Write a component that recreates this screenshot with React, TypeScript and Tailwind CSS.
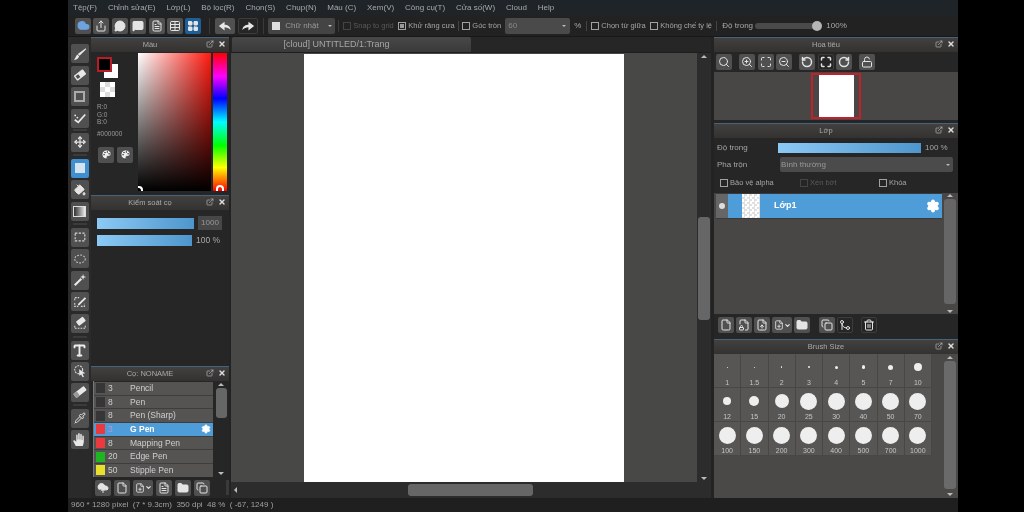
import React from "react";
import {
  Move, PaintBucket, Type, Pipette, File, FileText, FileUp, FilePlus, FileLock,
  Folder, Copy, Trash2, ZoomIn, ZoomOut, Maximize, RotateCcw, RotateCw, Settings, Palette, CloudUpload, Cloud,
  ChevronDown, ExternalLink, X, Share, MessageCircle, MessageSquare, Table, LayoutGrid,
  Search, Unlock, GitMerge,
} from "lucide-react";

const ic = "w-[12px] h-[12px] text-[#e4e4e4]";

function Btn({ children, active, dark, className = "" }: { children?: React.ReactNode; active?: boolean; dark?: boolean; className?: string }) {
  return (
    <div className={`flex items-center justify-center rounded-[2px] shrink-0 ${active ? "bg-[#3f8fd0]" : dark ? "bg-[#262626] border border-[#3c3c3c]" : "bg-[#505050]"} ${className}`}>
      {children}
    </div>
  );
}

function Head({ title, className = "" }: { title: string; className?: string }) {
  return (
    <div className={`h-[15px] shrink-0 relative flex items-center justify-center pr-[20px] border-t border-[#46637c] bg-gradient-to-b from-[#424140] to-[#333231] ${className}`}>
      <span className="text-[7.5px] text-[#a9a9a9]">{title}</span>
      <div className="absolute right-[3px] top-[2px] flex gap-[4px] items-center">
        <ExternalLink className="w-[8px] h-[8px] text-[#bbbbbb]" strokeWidth={2} />
        <X className="w-[8px] h-[8px] text-[#dddddd]" strokeWidth={4} />
      </div>
    </div>
  );
}

function Tool({ children, active }: { children: React.ReactNode; active?: boolean }) {
  return <Btn active={active} className="w-[18px] h-[19px]">{children}</Btn>;
}

function Bar() {
  return <div className="h-[2px] w-[14px] bg-[#3b3b3b] mx-auto" />;
}

function CheckBox({ label, checked, dim, className = "" }: { label: string; checked?: boolean; dim?: boolean; className?: string }) {
  return (
    <div className={`flex items-center gap-[2px] shrink-0 ${className}`}>
      <div className={`w-[8px] h-[8px] border ${dim ? "border-[#444]" : "border-[#a0a0a0]"} flex items-center justify-center`}>
        {checked && <div className="w-[4px] h-[4px] bg-[#999]" />}
      </div>
      <span className={`text-[7.5px] whitespace-nowrap ${dim ? "text-[#5a5a5a]" : "text-[#a5a5a5]"}`}>{label}</span>
    </div>
  );
}

function Svg({ children, size = 14 }: { children: React.ReactNode; size?: number }) {
  return <svg width={size} height={size} viewBox="0 0 16 16" fill="#e8e8e8">{children}</svg>;
}

const BrushIcon = () => <Svg><path d="M14.5 1.5 L15 2.5 L7.5 10 L5.5 8 Z M5 8.5 L7 10.5 C6 14 3 14.5 1 14.5 C3 13 3 10.5 5 8.5Z" /></Svg>;
const EraserIcon = () => <Svg><g transform="rotate(-38 8 8)"><rect x="1.5" y="4.5" width="13" height="7" rx="1" /><rect x="3" y="6" width="4" height="4" fill="#505050" /></g></Svg>;
const MarkerIcon = () => <Svg><g transform="rotate(-38 8 8)"><rect x="0.5" y="5" width="15" height="6" rx="1" /><rect x="0.5" y="5" width="5" height="6" rx="1" fill="#999" /></g></Svg>;
const CorrectIcon = () => <Svg><path d="M2 10 L6 13 L14 4" fill="none" stroke="#e8e8e8" strokeWidth="2" /><circle cx="2.5" cy="5" r="1" /><circle cx="5" cy="7.5" r="1" /></Svg>;
const UndoIcon = () => <Svg><path d="M14.5 12.5 C14 8 10.5 6.5 7.5 6.5 V3 L1 8 L7.5 13 V9.5 C10 9.5 12.5 10.5 14.5 12.5Z" /></Svg>;
const RedoIcon = () => <Svg><path d="M1.5 12.5 C2 8 5.5 6.5 8.5 6.5 V3 L15 8 L8.5 13 V9.5 C6 9.5 3.5 10.5 1.5 12.5Z" /></Svg>;
const DashedSel = () => <Svg><rect x="2.5" y="3.5" width="11" height="9" fill="none" stroke="#d8d8d8" strokeWidth="1.3" strokeDasharray="2.5 1.6" /></Svg>;
const DashedLasso = () => <Svg><ellipse cx="8" cy="8" rx="6" ry="4.5" fill="none" stroke="#c8c8c8" strokeWidth="1.2" strokeDasharray="2 1.5" /></Svg>;
const WandIcon = () => <Svg><path d="M2 14 L9.5 6.5" stroke="#e8e8e8" strokeWidth="2.4" /><path d="M11.5 1 L12.3 3.7 L15 4.5 L12.3 5.3 L11.5 8 L10.7 5.3 L8 4.5 L10.7 3.7Z" /></Svg>;
const SelPen = () => <Svg><path d="M2 6 V3 H7 M2 9 V13 H6 M9 13 H13 V10" fill="none" stroke="#d8d8d8" strokeWidth="1.2" strokeDasharray="2 1.2" /><path d="M6 10 L13.5 2.5 L15 4 L7.5 11.5 L5.5 12Z" /></Svg>;
const SelEraser = () => <Svg><path d="M2 11 V14 H14 V11" fill="none" stroke="#d8d8d8" strokeWidth="1.2" strokeDasharray="2 1.2" /><g transform="rotate(-38 9 6)"><rect x="4" y="3" width="10" height="6" rx="1" /></g></Svg>;
const SelCursor = () => <Svg><circle cx="6.5" cy="6.5" r="4.5" fill="none" stroke="#d8d8d8" strokeWidth="1.3" strokeDasharray="2 1.2" /><path d="M7 6 L14 10.5 L10.8 11.2 L12.5 14.5 L11 15 L9.3 12 L7.2 13.5Z" /></Svg>;
const HandIcon = () => <Svg size={15}><path d="M4 15 L1.5 10 C1 9 2.3 8.2 3 9 L4.5 10.5 V3.5 C4.5 2.4 6 2.4 6 3.5 V8 H6.6 V2 C6.6 0.9 8.2 0.9 8.2 2 V8 H8.8 V2.8 C8.8 1.7 10.4 1.7 10.4 2.8 V8.5 H11 V4.5 C11 3.4 12.6 3.4 12.6 4.5 V11 L11.5 15Z" /></Svg>;

const brushes = [
  { n: "3", name: "Pencil", c: "#363636" },
  { n: "8", name: "Pen", c: "#363636" },
  { n: "8", name: "Pen (Sharp)", c: "#363636" },
  { n: "3", name: "G Pen", c: "#ea3a3f", sel: true },
  { n: "8", name: "Mapping Pen", c: "#ea3a3f" },
  { n: "20", name: "Edge Pen", c: "#1fb520" },
  { n: "50", name: "Stipple Pen", c: "#e9e02a" },
];

const sizes = [
  ["1", 0.6], ["1.5", 0.8], ["2", 1.3], ["3", 2.2], ["4", 3], ["5", 3.5], ["7", 5], ["10", 8],
  ["12", 8], ["15", 10], ["20", 14], ["25", 17], ["30", 17], ["40", 17], ["50", 17], ["70", 17],
  ["100", 17], ["150", 17], ["200", 17], ["300", 17], ["400", 17], ["500", 17], ["700", 17], ["1000", 17],
] as [string, number][];

const menu = ["Tệp(F)", "Chỉnh sửa(E)", "Lớp(L)", "Bộ lọc(R)", "Chọn(S)", "Chụp(N)", "Màu (C)", "Xem(V)", "Công cụ(T)", "Cửa số(W)", "Cloud", "Help"];

export default function App() {
  return (
    <div className="w-[1024px] h-[512px] bg-black flex overflow-hidden blur-[0.45px]" style={{ fontFamily: '"Liberation Sans", "Noto Sans", sans-serif' }}>
      <div className="w-[68px] shrink-0" />
      <div className="w-[890px] shrink-0 flex flex-col bg-[#232323]">
        {/* menu */}
        <div className="h-[15px] shrink-0 bg-[#1f2429] flex items-center pl-[5px] gap-[10.9px]">
          {menu.map((m) => <span key={m} className="text-[8px] text-[#a8a8a8] whitespace-nowrap">{m}</span>)}
        </div>
        {/* toolbar */}
        <div className="h-[22px] shrink-0 bg-[#222222] flex items-center pl-[7px] border-b border-[#181818]">
          <div className="flex gap-[2.4px] items-center">
            <Btn className="w-[16px] h-[16px]"><Cloud className="w-[13px] h-[13px] text-[#6ea3e0]" fill="#6ea3e0" /></Btn>
            <Btn className="w-[16px] h-[16px]"><Share className={ic} /></Btn>
            <Btn className="w-[16px] h-[16px]"><MessageCircle className={ic} fill="#e4e4e4" /></Btn>
            <Btn className="w-[16px] h-[16px]"><MessageSquare className={ic} fill="#e4e4e4" /></Btn>
            <Btn className="w-[16px] h-[16px]"><FileText className={ic} /></Btn>
            <Btn className="w-[16px] h-[16px]"><Table className={ic} /></Btn>
            <div className="w-[16px] h-[16px] shrink-0 rounded-[2px] bg-[#1d5f99] flex items-center justify-center"><LayoutGrid className={ic} fill="#e4e4e4" /></div>
          </div>
          <div className="w-[1px] h-[16px] bg-[#3a3a3a] ml-[8px] mr-[5px]" />
          <div className="flex gap-[3px]">
            <Btn className="w-[20px] h-[16px]"><UndoIcon /></Btn>
            <Btn dark className="w-[20px] h-[16px]"><RedoIcon /></Btn>
          </div>
          <div className="w-[1px] h-[16px] bg-[#3a3a3a] ml-[5px] mr-[4px]" />
          <div className="w-[67px] h-[16px] bg-[#444444] rounded-[2px] flex items-center pl-[4px] shrink-0">
            <div className="w-[8px] h-[8px] bg-[#dddddd]" />
            <span className="text-[8px] text-[#999] ml-[5px]">Chữ nhật</span>
            <span className="ml-auto mr-[3px] w-0 h-0 border-x-[2px] border-x-transparent border-t-[2px] border-t-[#bbb]" />
          </div>
          <div className="w-[1px] h-[12px] bg-[#3a3a3a] ml-[3px] mr-[4px]" />
          <CheckBox label="Snap to grid" dim className="w-[55px]" />
          <CheckBox label="Khử răng cưa" checked className="w-[60px]" />
          <div className="w-[1px] h-[10px] bg-[#444] mr-[3px]" />
          <CheckBox label="Góc tròn" className="w-[43px]" />
          <div className="w-[65px] h-[16px] bg-[#4a4a4a] rounded-[2px] flex items-center pl-[3px] shrink-0">
            <span className="text-[8px] text-[#888]">60</span>
            <span className="ml-auto mr-[4px] w-0 h-0 border-x-[2px] border-x-transparent border-t-[2px] border-t-[#bbb]" />
          </div>
          <span className="text-[8px] text-[#aaa] ml-[4px] w-[12px]">%</span>
          <div className="w-[1px] h-[10px] bg-[#444] mr-[4px]" />
          <CheckBox label="Chọn từ giữa" className="w-[59px]" />
          <CheckBox label="Không chế tỷ lệ" className="w-[66px]" />
          <div className="w-[1px] h-[10px] bg-[#444] mr-[5px]" />
          <span className="text-[8px] text-[#aaa] whitespace-nowrap w-[33px]">Độ trong</span>
          <div className="w-[60px] h-[6px] bg-[#4a4a4a] rounded-[3px]" />
          <div className="w-[10px] h-[10px] rounded-full bg-[#b5b5b5] -ml-[3px] shrink-0" />
          <span className="text-[8px] text-[#aaa] ml-[4px]">100%</span>
        </div>
        {/* main */}
        <div className="flex-1 flex min-h-0">
          {/* tools */}
          <div className="w-[23px] shrink-0 flex flex-col items-center pt-[7px] bg-[#2a2a2a]">
            <div className="flex flex-col gap-[2.5px]">
              <Tool><BrushIcon /></Tool>
              <Tool><EraserIcon /></Tool>
              <Tool><div className="w-[11px] h-[11px] border-2 border-[#aaaaaa]" /></Tool>
              <Tool><CorrectIcon /></Tool>
            </div>
            <div className="my-[1.5px]"><Bar /></div>
            <Tool><Move className={ic} strokeWidth={2.5} /></Tool>
            <div className="my-[2.5px]"><Bar /></div>
            <div className="flex flex-col gap-[2.5px]">
              <Tool active><div className="w-[10px] h-[10px] bg-[#d5e3ef]" /></Tool>
              <Tool><PaintBucket className={ic} fill="#e4e4e4" /></Tool>
              <Tool><div className="w-[13px] h-[11px] bg-gradient-to-r from-[#333] to-[#eee] border border-[#ddd]" /></Tool>
            </div>
            <div className="my-[2.5px]"><Bar /></div>
            <div className="flex flex-col gap-[2.5px]">
              <Tool><DashedSel /></Tool>
              <Tool><DashedLasso /></Tool>
              <Tool><WandIcon /></Tool>
              <Tool><SelPen /></Tool>
              <Tool><SelEraser /></Tool>
            </div>
            <div className="my-[3px]"><Bar /></div>
            <div className="flex flex-col gap-[2px]">
              <Tool><Type className="w-[15px] h-[15px] text-[#eee]" strokeWidth={3} /></Tool>
              <Tool><SelCursor /></Tool>
              <Tool><MarkerIcon /></Tool>
            </div>
            <div className="my-[2.5px]"><Bar /></div>
            <div className="flex flex-col gap-[2.5px]">
              <Tool><Pipette className={ic} /></Tool>
              <Tool><HandIcon /></Tool>
            </div>
          </div>
          {/* left panels */}
          <div className="w-[138px] shrink-0 flex flex-col bg-[#262626]">
            <Head title="Màu" />
            <div className="h-[143px] shrink-0 flex pt-[1px] pb-[4px]">
              <div className="w-[47px] shrink-0 pl-[6px] pt-[4px] flex flex-col">
                <div className="relative h-[23px]">
                  <div className="w-[14px] h-[14px] bg-white absolute left-[7px] top-[7px]" />
                  <div className="w-[15px] h-[15px] bg-black border-2 border-[#b81c24] absolute left-0 top-0" />
                </div>
                <div className="w-[15px] h-[15px] ml-[3px] mt-[2px] bg-[repeating-conic-gradient(#dcdcdc_0_25%,#ffffff_0_50%)] bg-size-[10px_10px]" />
                <div className="text-[6.5px] leading-[7.5px] text-[#9a9a9a] mt-[6px]">R:0<br />G:0<br />B:0</div>
                <div className="text-[6.5px] text-[#9a9a9a] mt-[3px] leading-[10px]">#000000</div>
                <div className="flex gap-[3px] ml-[1px] mt-[8px]">
                  <Btn className="w-[16px] h-[16px]"><Palette className="w-[11px] h-[11px] text-[#eee]" fill="#eee" stroke="#444" /></Btn>
                  <Btn className="w-[16px] h-[16px]"><Palette className="w-[11px] h-[11px] text-[#eee]" fill="#eee" stroke="#444" /></Btn>
                </div>
              </div>
              <div className="w-[73px] shrink-0 relative bg-[linear-gradient(to_bottom,transparent,#000),linear-gradient(to_right,#fff,#ff1a10)]">
                <div className="absolute left-0 bottom-0 w-[5px] h-[5px] border-t-2 border-r-2 border-white rounded-tr-[4px]" />
              </div>
              <div className="w-[14px] ml-[2px] shrink-0 relative bg-[linear-gradient(to_bottom,#ff0000,#ff00ff_17%,#0000ff_33%,#00ffff_50%,#00ff00_67%,#ffff00_83%,#ff0000)]">
                <div className="absolute left-[3px] bottom-0 w-[8px] h-[6px] border-t-2 border-x-2 border-white rounded-t-[5px]" />
              </div>
            </div>
            <Head title="Kiểm soát cọ" />
            <div className="h-[156px] shrink-0 pl-[6px] pt-[6px] flex flex-col gap-[5px]">
              <div className="flex items-center">
                <div className="w-[97px] h-[11px] bg-gradient-to-r from-[#8ccaf5] to-[#4d96cd]" />
                <div className="ml-[4px] w-[24px] h-[14px] bg-[#474747] text-[8px] text-[#999] flex items-center justify-center">1000</div>
              </div>
              <div className="flex items-center">
                <div className="w-[95px] h-[11px] bg-gradient-to-r from-[#8ccaf5] to-[#4d96cd]" />
                <div className="ml-[4px] text-[8.5px] text-[#aaa] leading-[11px]">100 %</div>
              </div>
            </div>
            <Head title="Cọ: NONAME" />
            <div className="h-[96px] shrink-0 flex pl-[2px]">
              <div className="w-[120px] shrink-0 flex flex-col overflow-hidden border-l border-[#777] pt-[1px]">
                {brushes.map((b) => (
                  <div key={b.name} className={`h-[13.7px] shrink-0 flex items-center border-b border-[#3e3e3e] ${b.sel ? "bg-[#4f9dd8]" : "bg-[#555453]"}`}>
                    <div className="w-[9px] h-[10px] ml-[2px] shrink-0" style={{ backgroundColor: b.c }} />
                    <span className={`text-[8.5px] ml-[3px] w-[22px] ${b.sel ? "text-[#b79ad8]" : "text-[#cfcfcf]"}`}>{b.n}</span>
                    <span className={`text-[8.5px] whitespace-nowrap ${b.sel ? "text-white font-bold" : "text-[#cfcfcf]"}`}>{b.name}</span>
                    {b.sel && <Settings className="w-[10px] h-[10px] text-white ml-auto mr-[2px]" fill="#fff" stroke="#fff" />}
                  </div>
                ))}
              </div>
              <div className="w-[14px] ml-[1px] flex flex-col items-center">
                <span className="mt-[2px] w-0 h-0 border-x-[3px] border-x-transparent border-b-[3px] border-b-[#bbb]" />
                <div className="w-[11px] h-[30px] mt-[2px] bg-[#666] rounded-[3px]" />
                <span className="mt-auto mb-[2px] w-0 h-0 border-x-[3px] border-x-transparent border-t-[3px] border-t-[#bbb]" />
              </div>
            </div>
            <div className="flex-1 flex items-center pl-[4px] gap-[3px]">
              <Btn className="w-[16px] h-[16px]"><CloudUpload className={ic} fill="#e4e4e4" /></Btn>
              <Btn className="w-[16px] h-[16px]"><File className={ic} /></Btn>
              <Btn className="w-[20px] h-[16px]"><FilePlus className="w-[10px] h-[10px] text-[#e4e4e4]" /><ChevronDown className="w-[7px] h-[7px] text-[#e4e4e4]" strokeWidth={4} /></Btn>
              <Btn className="w-[16px] h-[16px]"><FileText className={ic} /></Btn>
              <Btn className="w-[16px] h-[16px]"><Folder className={ic} fill="#e4e4e4" /></Btn>
              <Btn className="w-[16px] h-[16px]"><Copy className={ic} /></Btn>
              <div className="w-[5px] h-[15px] bg-[#3a3a3a] ml-[13px]" />
            </div>
          </div>
          {/* canvas */}
          <div className="flex-1 min-w-0 flex flex-col ml-[2px] mr-[3px]">
            <div className="h-[15px] shrink-0 flex pl-[1px] bg-[#262626]">
              <div className="w-[239px] h-[15px] bg-gradient-to-b from-[#484848] to-[#3a3a3a] flex items-center justify-center pr-[30px] rounded-t-[2px]">
                <span className="text-[9px] text-[#a5a5a5]">[cloud] UNTITLED/1:Trang</span>
              </div>
            </div>
            <div className="flex-1 flex min-h-0 bg-[#484847] border-t border-[#1e1e1e]">
              <div className="flex-1 flex flex-col min-w-0">
                <div className="flex-1 pl-[73px] pt-[1px]">
                  <div className="w-[320px] h-full bg-white" />
                </div>
                <div className="h-[16px] shrink-0 flex items-center bg-[#2c2c2c] px-[3px]">
                  <span className="w-0 h-0 border-y-[3px] border-y-transparent border-r-[3px] border-r-[#bbb]" />
                  <div className="w-[125px] h-[12px] bg-[#666] rounded-[3px] ml-[171px]" />
                </div>
              </div>
              <div className="w-[14px] shrink-0 flex flex-col items-center bg-[#2c2c2c]">
                <span className="mt-[2px] w-0 h-0 border-x-[3px] border-x-transparent border-b-[3px] border-b-[#bbb]" />
                <div className="w-[12px] h-[103px] bg-[#666] rounded-[3px] mt-[159px]" />
                <span className="mt-auto mb-[18px] w-0 h-0 border-x-[3px] border-x-transparent border-t-[3px] border-t-[#bbb]" />
              </div>
            </div>
          </div>
          {/* right */}
          <div className="w-[244px] shrink-0 flex flex-col bg-[#262626]">
            <Head title="Hoa tiêu" />
            <div className="h-[20px] shrink-0 flex items-center pl-[2px] gap-[2.5px]">
              <Btn className="w-[16px] h-[16px]"><Search className={ic} /></Btn>
              <div className="w-[2px]" />
              <Btn className="w-[16px] h-[16px]"><ZoomIn className={ic} /></Btn>
              <Btn className="w-[16px] h-[16px]"><Maximize className={ic} /></Btn>
              <Btn className="w-[16px] h-[16px]"><ZoomOut className={ic} /></Btn>
              <div className="w-[2px]" />
              <Btn className="w-[16px] h-[16px]"><RotateCcw className={ic} strokeWidth={3} /></Btn>
              <Btn dark className="w-[16px] h-[16px]"><Maximize className={ic} strokeWidth={3} /></Btn>
              <Btn className="w-[16px] h-[16px]"><RotateCw className={ic} strokeWidth={3} /></Btn>
              <div className="w-[2px]" />
              <Btn className="w-[16px] h-[16px]"><Unlock className={ic} /></Btn>
            </div>
            <div className="h-[48px] shrink-0 bg-[#484746] flex justify-center pt-[1px]">
              <div className="w-[50px] h-[46px] border-2 border-[#c4202a] flex justify-center">
                <div className="w-[35px] h-full bg-white" />
              </div>
            </div>
            <div className="h-[3px] shrink-0" />
            <Head title="Lớp" />
            <div className="flex-none h-[55px] flex flex-col">
              <div className="flex items-center pl-[3px] mt-[3px] h-[13px]">
                <span className="text-[8px] text-[#a5a5a5] w-[61px]">Độ trong</span>
                <div className="w-[143px] h-[10px] bg-gradient-to-r from-[#8ccaf5] to-[#4d96cd]" />
                <span className="text-[8px] text-[#a5a5a5] ml-[4px]">100 %</span>
              </div>
              <div className="flex items-center pl-[3px] mt-[3px] h-[15px]">
                <span className="text-[8px] text-[#a5a5a5] w-[63px]">Pha trộn</span>
                <div className="w-[173px] h-[15px] bg-[#4b4b4b] rounded-[2px] flex items-center pl-[1px]">
                  <span className="text-[8px] text-[#999]">Bình thường</span>
                  <span className="ml-auto mr-[3px] w-0 h-0 border-x-[2px] border-x-transparent border-t-[2px] border-t-[#bbb]" />
                </div>
              </div>
              <div className="flex items-center pl-[6px] mt-[5px]">
                <CheckBox label="Bảo vệ alpha" className="w-[80px]" />
                <CheckBox label="Xén bớt" dim className="w-[79px]" />
                <CheckBox label="Khóa" />
              </div>
            </div>
            <div className="h-[121px] shrink-0 bg-[#484746] flex pl-[2px]">
              <div className="w-[226px] shrink-0">
                <div className="h-[26px] flex bg-[#4f9dd8] border-y border-[#3a3a3a] items-center">
                  <div className="w-[12px] h-full bg-[#666] flex items-center justify-center"><div className="w-[6px] h-[6px] rounded-full bg-[#ddd]" /></div>
                  <div className="w-[18px] h-[24px] ml-[14px] bg-[repeating-conic-gradient(#e0e0e0_0_25%,#ffffff_0_50%)] bg-size-[5px_5px]" />
                  <span className="text-[9px] text-white font-bold ml-[14px]">Lớp1</span>
                  <Settings className="w-[14px] h-[14px] text-white ml-auto mr-[2px]" fill="#fff" stroke="#fff" />
                </div>
              </div>
              <div className="w-[12px] ml-[2px] flex flex-col items-center">
                <span className="mt-[1px] w-0 h-0 border-x-[3px] border-x-transparent border-b-[3px] border-b-[#bbb]" />
                <div className="w-[12px] h-[105px] mt-[2px] bg-[#666] rounded-[3px]" />
                <span className="mt-auto mb-[1px] w-0 h-0 border-x-[3px] border-x-transparent border-t-[3px] border-t-[#bbb]" />
              </div>
            </div>
            <div className="h-[22px] shrink-0 flex items-center pl-[4px] gap-[2px]">
              <Btn className="w-[16px] h-[16px]"><File className={ic} /></Btn>
              <Btn className="w-[16px] h-[16px]"><FileLock className={ic} /></Btn>
              <Btn className="w-[16px] h-[16px]"><FileUp className={ic} /></Btn>
              <Btn className="w-[20px] h-[16px]"><FilePlus className="w-[10px] h-[10px] text-[#e4e4e4]" /><ChevronDown className="w-[7px] h-[7px] text-[#e4e4e4]" strokeWidth={4} /></Btn>
              <Btn className="w-[16px] h-[16px]"><Folder className={ic} fill="#e4e4e4" /></Btn>
              <div className="w-[5px]" />
              <Btn className="w-[16px] h-[16px]"><Copy className={ic} /></Btn>
              <Btn dark className="w-[16px] h-[16px]"><GitMerge className={ic} /></Btn>
              <div className="w-[4px]" />
              <Btn dark className="w-[16px] h-[16px]"><Trash2 className={ic} /></Btn>
            </div>
            <div className="h-[3px] shrink-0" />
            <Head title="Brush Size" />
            <div className="flex-1 bg-[#4a4948] flex min-h-0">
              <div className="w-[218px] h-[102px] shrink-0 grid grid-cols-8 grid-rows-3">
                {sizes.map(([l, d]) => (
                  <div key={l} className="flex flex-col items-center bg-[#575655] border-r border-b border-[#484746] pt-[4px]">
                    <div className="h-[18px] flex items-center justify-center">
                      <div className="rounded-full bg-[#eeeeee]" style={{ width: d, height: d }} />
                    </div>
                    <span className="text-[7px] leading-[8px] mt-[3px] text-[#c5c5c5]">{l}</span>
                  </div>
                ))}
              </div>
              <div className="w-[12px] ml-auto mr-[2px] flex flex-col items-center">
                <span className="mt-[2px] w-0 h-0 border-x-[3px] border-x-transparent border-b-[3px] border-b-[#bbb]" />
                <div className="w-[12px] h-[128px] mt-[2px] bg-[#6a6a6a] rounded-[3px]" />
                <span className="mt-auto mb-[2px] w-0 h-0 border-x-[3px] border-x-transparent border-t-[3px] border-t-[#bbb]" />
              </div>
            </div>
          </div>
        </div>
        {/* status */}
        <div className="h-[14px] shrink-0 bg-[#1f1f1f] flex items-center pl-[3px]">
          <span className="text-[8px] text-[#a0a0a0] whitespace-pre">960 * 1280 pixel  (7 * 9.3cm)  350 dpi  48 %  ( -67, 1249 )</span>
        </div>
      </div>
    </div>
  );
}
